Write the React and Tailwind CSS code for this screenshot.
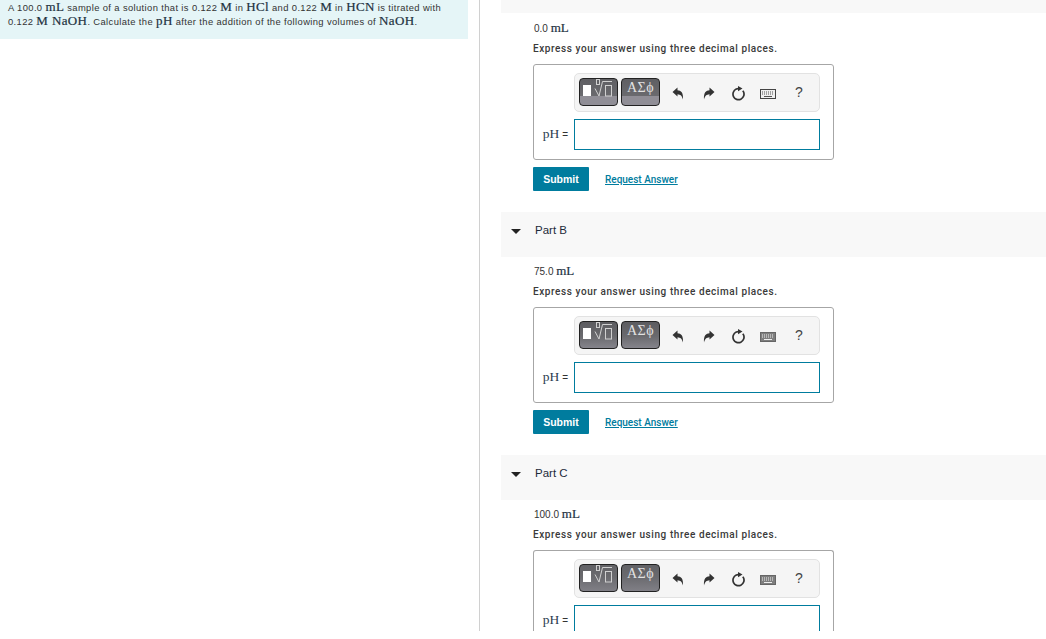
import React from "react";

const serif = "font-['Liberation_Serif',serif]";

function V({ children }) {
  return <span className={`${serif} text-[13px] leading-none font-normal text-[#22313f] [-webkit-text-stroke:0.2px_#22313f]`}>{children}</span>;
}

function btnBg(variant) {
  return variant === "A" ? "bg-[linear-gradient(#5f5f63_0,#6a6a6e_65%,#908e96_65%,#908e96_100%)]"
    : variant === "B" ? "bg-[linear-gradient(#5c5c60_0,#6a6a6e_55%,#85848b_100%)]"
    : "bg-[linear-gradient(#626266_0,#6a6a6e_45%,#807f86_100%)]";
}

function MathBtn({ variant }) {
  return (
    <div className={`w-[39px] h-[28px] rounded-[4px] border border-[#222] ${btnBg(variant)} relative overflow-hidden`}>
      <svg width="37" height="26" viewBox="0 0 37 26" className="block">
        <rect x="3" y="6" width="8" height="11" fill="#fff" />
        <g fill="none" stroke="#d0d0d0" strokeWidth="1">
          <rect x="16.5" y="0.5" width="3" height="5" />
          <path d="M15 9.5 L19 17 L22.5 2.5 H32" />
          <rect x="25.5" y="6.5" width="6" height="10.5" />
        </g>
      </svg>
    </div>
  );
}

function GreekBtn({ variant }) {
  return (
    <div className={`w-[39px] h-[28px] rounded-[4px] border border-[#222] ${btnBg(variant)} text-center ${serif} text-[14px] leading-[18px] tracking-[0.5px] text-[#e2e2e2] whitespace-nowrap overflow-hidden`}>
      ΑΣϕ
    </div>
  );
}

function Undo({ flip }) {
  return (
    <svg width="12" height="13" viewBox="0 0 12 13" className={`block ${flip ? "-scale-x-100" : ""}`}>
      <path d="M0.5 5 L5.5 0.5 V3.2 C9 3.4 11.5 5.5 11 12.5 C10 8.8 8.5 7.4 5.5 7.2 V9.5 Z" fill="#333" />
    </svg>
  );
}

function Reset() {
  return (
    <svg width="15" height="15" viewBox="0 0 15 15" className="block">
      <circle cx="7.5" cy="8.2" r="5.5" fill="none" stroke="#333" strokeWidth="1.7" strokeDasharray="30 6" strokeDashoffset="-3" transform="rotate(-70 7.5 8.2)" />
      <path d="M7 0 L11.5 2.6 L7 5.2 Z" fill="#333" />
    </svg>
  );
}

function Keyboard({ dim }) {
  return (
    <svg width="16" height="10" viewBox="0 0 16 10" className="block">
      <rect x="0.5" y="0.5" width="15" height="9" fill={dim ? "#7e7e7e" : "#f0f0f0"} stroke={dim ? "#666" : "#444"} />
      <path d="M2 3H14M2 5H14" stroke={dim ? "#eee" : "#555"} strokeWidth="1" strokeDasharray="1 1" />
      <path d="M4 7.5H12" stroke={dim ? "#eee" : "#555"} strokeWidth="1" />
    </svg>
  );
}

function AnswerBox({ variant, cut }) {
  return (
    <div className={`ml-[32px] w-[301px] ${cut ? "h-[81px] border-b-0 rounded-b-none" : "h-[96px]"} border border-[#a6a6a6] rounded-[3px] pt-[8px] pl-[40px]`}>
      <div className="w-[246px] h-[39px] rounded-[5px] border border-[#e2e2e2] bg-[#f5f5f5] flex items-center pl-[4px]">
        <div className="flex gap-[3px] -mt-[1px]">
          <MathBtn variant={variant} />
          <GreekBtn variant={variant} />
        </div>
        <div className="flex-1 flex items-center">
          <div className="w-[12px] ml-[12px] mt-[2px]"><Undo /></div>
          <div className="w-[12px] ml-[19px] mt-[2px]"><Undo flip /></div>
          <div className="ml-[16px] w-[15px] mt-[1px]"><Reset /></div>
          <div className="ml-[14px] mt-[2px]"><Keyboard dim={variant !== "A"} /></div>
          <div className="ml-[19px] text-[14px] text-[#444]">?</div>
        </div>
      </div>
      <div className="flex items-center mt-[7px] -ml-[40px]">
        <div className="w-[40px] shrink-0 pr-[6px] whitespace-nowrap text-[#333] flex items-baseline gap-[3px] justify-end">
          <span className={`${serif} text-[13.5px] text-[#2c3e50]`}>pH</span>
          <span className="text-[10px]">=</span>
        </div>
        <div className="w-[246px] h-[31px] border border-[#007c9e] bg-white shrink-0" />
      </div>
    </div>
  );
}

function Part({ label, amount, variant, cut }) {
  return (
    <section>
      {label && (
        <div className="h-[45px] bg-[#f8f8f8] flex items-center pl-[10px] pb-[7px]">
          <svg width="10" height="5" viewBox="0 0 10 5"><path d="M0 0H10L5 5Z" fill="#222" /></svg>
          <span className="ml-[14px] text-[11.5px] text-[#1c2a3a]">{label}</span>
        </div>
      )}
      <div className={`ml-[33px] ${label ? "mt-[6px]" : "mt-[7px]"} h-[16px] pt-[1px] leading-[16px] text-[10px] text-[#333]`}>
        {amount} <V>mL</V>
      </div>
      <p className="ml-[32px] mt-[6px] h-[14px] text-[10px] leading-[14px] font-medium tracking-[0.58px] text-[#3a3a3a] font-['Roboto',sans-serif] whitespace-nowrap">Express your answer using three decimal places.</p>
      <div className="mt-[8px]"><AnswerBox variant={variant} cut={cut} /></div>
      {!cut && (
        <div className="ml-[32px] mt-[7px] flex items-center h-[24px]">
          <button className="w-[56px] h-[24px] pt-[1px] rounded-[1px] bg-[#007c9e] text-white text-[10.5px] font-bold">Submit</button>
          <a className="ml-[16px] text-[#007c9e] underline text-[10px] font-medium font-['Roboto',sans-serif]">Request Answer</a>
        </div>
      )}
    </section>
  );
}

export default function App() {
  return (
    <div className="h-[631px] w-[1046px] overflow-hidden flex bg-white font-['Liberation_Sans',sans-serif]">
      <aside className="w-[480px] shrink-0 border-r border-[#d0d0d0]">
        <div className="w-[468px] h-[39px] bg-[#e5f5f7] pl-[8px] text-[9.4px] leading-[14px] text-[#333] tracking-[0.38px]">
          <p className="whitespace-nowrap h-[14px]">A 100.0 <V>mL</V> sample of a solution that is 0.122 <V>M</V> in <V>HCl</V> and 0.122 <V>M</V> in <V>HCN</V> is titrated with</p>
          <p className="whitespace-nowrap h-[14px]">0.122 <V>M NaOH</V>. Calculate the <V>pH</V> after the addition of the following volumes of <V>NaOH</V>.</p>
        </div>
      </aside>
      <main className="flex-1 pl-[21px]">
        <div className="h-[13px] bg-[#f8f8f8]" />
        <Part amount="0.0" variant="A" />
        <div className="h-[21px]" />
        <Part label="Part B" amount="75.0" variant="B" />
        <div className="h-[21px]" />
        <Part label="Part C" amount="100.0" variant="C" cut />
      </main>
    </div>
  );
}
